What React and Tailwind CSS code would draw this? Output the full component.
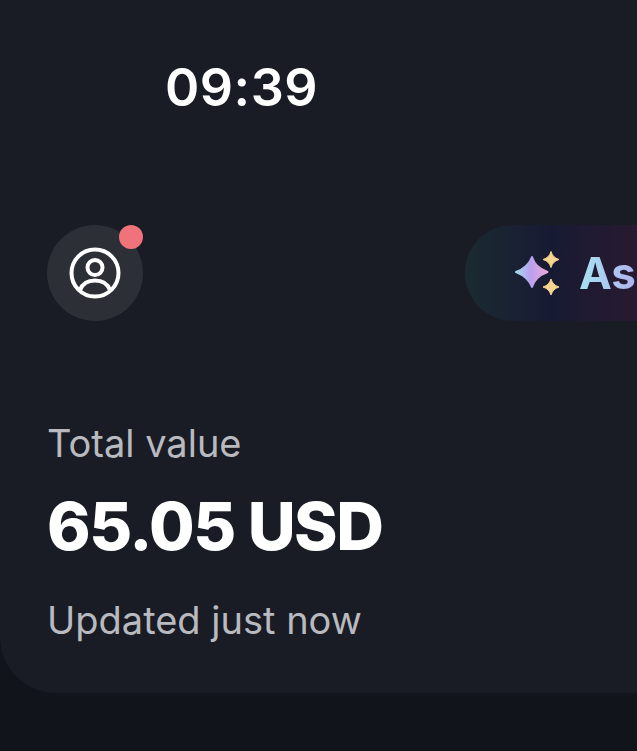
import React from 'react';

const UserIcon = () => (
  <svg width="52" height="52" viewBox="0 0 52 52" fill="none" stroke="white" strokeWidth="4" strokeLinecap="round">
    <circle cx="26" cy="26" r="23.500" />
    <circle cx="26" cy="20.500" r="7.500" />
    <path d="M11 43c2.500-6.500 8-9.500 15-9.500s12.500 3 15 9.500" />
  </svg>
);

const Sparkles = () => (
  <svg width="48" height="44" viewBox="0 0 48 44">
    <defs>
      <linearGradient id="big" x1="0" y1="0" x2="1" y2="0">
        <stop offset="0" stopColor="#a5d8f0" />
        <stop offset="0.45" stopColor="#b9a0ee" />
        <stop offset="1" stopColor="#eaa8d8" />
      </linearGradient>
    </defs>
    <path d="M18 6C20.500 13 24 17.500 33.500 21C24 24.500 20.500 29 18 36C15.500 29 11 24.500 2 21C11 17.500 15.500 13 18 6Z" fill="url(#big)" stroke="url(#big)" strokeWidth="2" strokeLinejoin="round" />
    <path d="M37 0.500C38.500 5 40.500 7 45 8.500C40.500 10 38.500 12 37 16.500C35.500 12 33.500 10 29 8.500C33.500 7 35.500 5 37 0.500Z" fill="#f6d58e" stroke="#f6d58e" strokeWidth="1" strokeLinejoin="round" />
    <path d="M37 28C38.500 32.500 40.500 34.500 45 36C40.500 37.500 38.500 39.500 37 44C35.500 39.500 33.500 37.500 29 36C33.500 34.500 35.500 32.500 37 28Z" fill="#f6d58e" stroke="#f6d58e" strokeWidth="1" strokeLinejoin="round" />
  </svg>
);

const App = () => {
  return (
    <div className="w-[637px] h-[751px] overflow-hidden bg-[#12141c] font-['Inter',sans-serif]">
      <div className="w-[720px] h-[693px] bg-[#191c25] rounded-bl-[56px] flex flex-col">
        <div className="pl-[165px] pt-[56px] h-[225px]">
          <div className="text-[52px] leading-[64px] font-semibold text-white tracking-[0.5px]">09:39</div>
        </div>

        <div className="flex pl-[47px]">
          <div className="relative w-24 h-24 rounded-full bg-[#2c2f36] flex items-center justify-center">
            <UserIcon />
            <span className="absolute top-0 right-0 w-6 h-6 rounded-full bg-[#f0727a]" />
          </div>
          <div className="ml-[322px] w-[172px] h-24 rounded-l-full flex items-center gap-[17px] pl-[49px] bg-gradient-to-r from-[#1b2a30] via-[#171a33] to-[#281a30] overflow-hidden">
            <div className="shrink-0"><Sparkles /></div>
            <span className="text-[44px] leading-none font-bold bg-gradient-to-r from-[#a5e3f0] to-[#b19cf0] bg-clip-text text-transparent whitespace-nowrap">Ask</span>
          </div>
        </div>

        <div className="pl-[47px] pt-[98px]">
          <div className="text-[38px] leading-[48px] text-[#b8babf]">Total value</div>
          <div className="mt-[21px] text-[66px] leading-[76px] font-extrabold text-white tracking-[-1.5px]">65.05 USD</div>
          <div className="mt-[32px] text-[38px] leading-[48px] text-[#b8babf]">Updated just now</div>
        </div>
      </div>
    </div>
  );
};

export default App;
